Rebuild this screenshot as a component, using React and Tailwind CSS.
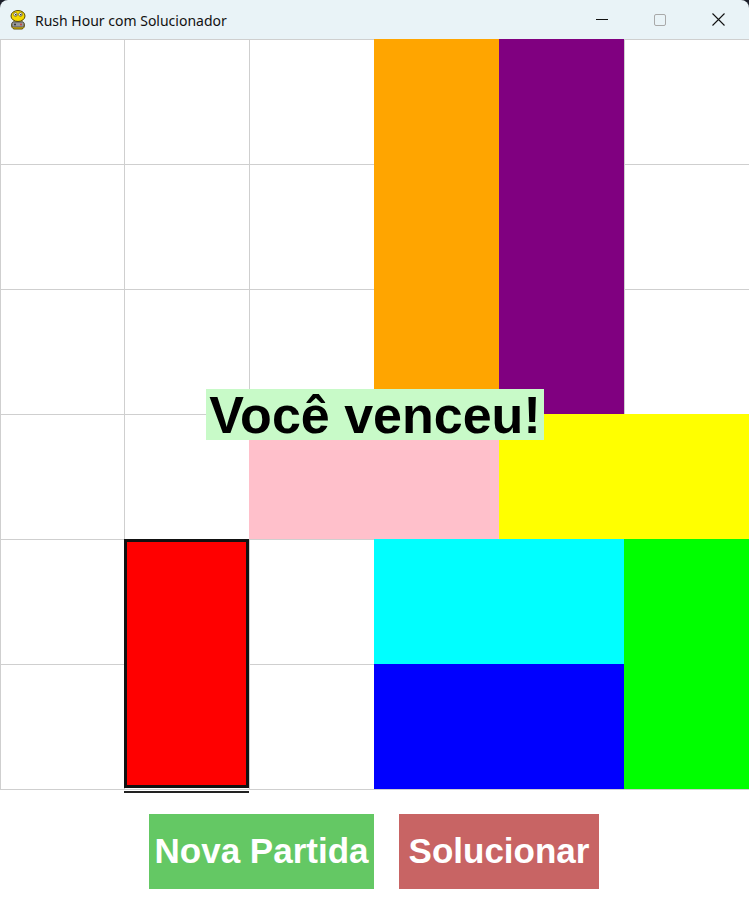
const FONT = { fontFamily: '"Liberation Sans", Arial, sans-serif' }

const PIECES = [
  { key: 'orange', cls: 'col-start-4 row-start-1 row-span-3 bg-[#ffa500]' },
  { key: 'purple', cls: 'col-start-5 row-start-1 row-span-3 bg-[#800080]' },
  { key: 'pink',   cls: 'col-start-3 col-span-2 row-start-4 bg-[#ffc0cb]' },
  { key: 'yellow', cls: 'col-start-5 col-span-2 row-start-4 bg-[#ffff00]' },
  { key: 'red',    cls: 'col-start-2 row-start-5 row-span-2 bg-[#ff0000] border-[3px] border-[#111] mb-[1px]' },
  { key: 'cyan',   cls: 'col-start-4 col-span-2 row-start-5 bg-[#00ffff]' },
  { key: 'blue',   cls: 'col-start-4 col-span-2 row-start-6 bg-[#0000ff]' },
  { key: 'green',  cls: 'col-start-6 row-start-5 row-span-2 bg-[#00ff00]' },
]

const COL = ['col-start-1', 'col-start-2', 'col-start-3', 'col-start-4', 'col-start-5', 'col-start-6']
const ROW = ['row-start-1', 'row-start-2', 'row-start-3', 'row-start-4', 'row-start-5', 'row-start-6']

function PygameIcon() {
  return (
    <svg width="20" height="22" viewBox="0 0 20 22">
      {/* body */}
      <path d="M5 13 C3 15 3 19 6 20 L14 20 C17 19 17 15 15 13 Z" fill="#e8c400" stroke="#5a4a00" strokeWidth="1" />
      {/* head */}
      <ellipse cx="10" cy="7" rx="7" ry="5.5" fill="#f4d800" stroke="#5a4a00" strokeWidth="1" />
      <circle cx="7.5" cy="5.5" r="1.8" fill="#fff" stroke="#333" strokeWidth="0.6" />
      <circle cx="12.5" cy="5.5" r="1.8" fill="#fff" stroke="#333" strokeWidth="0.6" />
      <circle cx="7.8" cy="5.8" r="0.8" fill="#111" />
      <circle cx="12.8" cy="5.8" r="0.8" fill="#111" />
      {/* controller */}
      <rect x="4" y="13" width="12" height="5" rx="1.5" fill="#9a9a9a" stroke="#444" strokeWidth="0.8" />
      <circle cx="7" cy="15.5" r="1" fill="#333" />
      <circle cx="13" cy="15.5" r="0.9" fill="#c33" />
    </svg>
  )
}

function TitleBar() {
  return (
    <div className="h-[39px] shrink-0 bg-[#e9f3f7] rounded-t-[8px] flex items-center">
      <div className="ml-[8px] mt-[1px] flex items-center">
        <PygameIcon />
      </div>
      <span
        className="ml-[7px] text-[14px] text-[#111] mt-[1px]"
        style={{ fontFamily: '"Noto Sans", "Open Sans", sans-serif' }}
      >
        Rush Hour com Solucionador
      </span>
      <div className="ml-auto mr-[2px] flex items-center h-full">
        <div className="w-[58px] h-full flex items-center justify-center">
          <div className="w-[12px] h-[1px] bg-[#111]" />
        </div>
        <div className="w-[58px] h-full flex items-center justify-center">
          <div className="w-[12px] h-[12px] border border-[#a9a9a9] rounded-[2px]" />
        </div>
        <div className="w-[58px] h-full flex items-center justify-center">
          <svg width="13" height="13" viewBox="0 0 13 13">
            <path d="M0.5 0.5 L12.5 12.5 M12.5 0.5 L0.5 12.5" stroke="#111" strokeWidth="1.1" />
          </svg>
        </div>
      </div>
    </div>
  )
}

function Board() {
  const cells = []
  for (let r = 0; r < 6; r++) {
    for (let c = 0; c < 6; c++) {
      cells.push(
        <div key={`${r}-${c}`} className={`${COL[c]} ${ROW[r]} border-t border-l border-[#cfcfcf] bg-white`} />
      )
    }
  }

  return (
    <div className="relative w-[749px] overflow-hidden border-l border-b border-[#cfcfcf]">
      <div className="ml-[-2px] w-[750px] grid grid-cols-[repeat(6,125px)] grid-rows-[repeat(6,125px)]">
        {cells}
        {PIECES.map(p => (
          <div key={p.key} className={p.cls} />
        ))}
      </div>

      {/* victory banner */}
      <div
        className="absolute left-[205px] top-[350px] w-[338px] h-[51px] bg-[#c8fac8] flex items-center justify-center text-[52px] font-bold text-black leading-none"
        style={FONT}
      >
        Você venceu!
      </div>
    </div>
  )
}

export default function App() {
  return (
    <div className="w-[749px] h-[910px] bg-[#1c1f2a] overflow-hidden flex flex-col">
      <TitleBar />
      <div className="bg-white flex-1">
        <Board />
        <div className="ml-[124px] w-[125px] h-[2px] bg-[#222] mt-[1px]" />

        <div className="flex gap-[25px] ml-[149px] mt-[21px]" style={FONT}>
          <button className="w-[225px] h-[75px] bg-[#64c864] text-white text-[35px] font-bold flex items-center justify-center">
            Nova Partida
          </button>
          <button className="w-[200px] h-[75px] bg-[#c86464] text-white text-[35px] font-bold flex items-center justify-center">
            Solucionar
          </button>
        </div>
      </div>
    </div>
  )
}
